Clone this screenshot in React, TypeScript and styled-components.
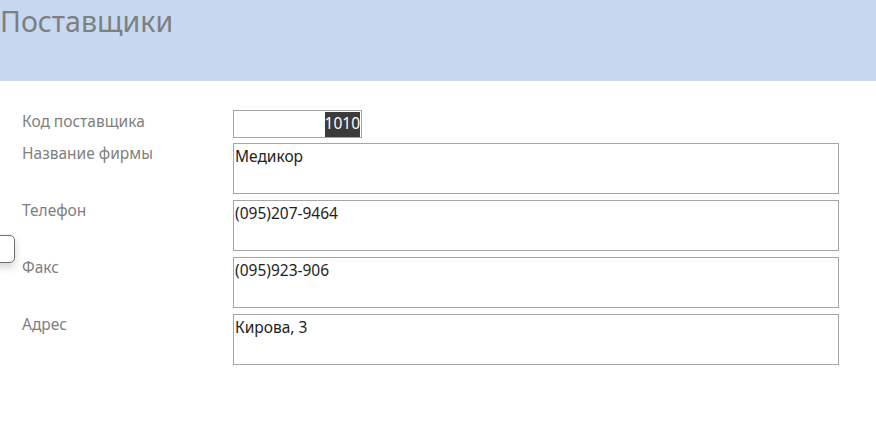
import React from "react";
import styled, { createGlobalStyle } from "styled-components";

const Global = createGlobalStyle`
  html, body { margin: 0; padding: 0; background: #ffffff; }
  body { font-family: "Noto Sans", "Open Sans", sans-serif; }
`;

const Page = styled.div`
  position: relative;
  width: 876px;
  height: 441px;
  background: #ffffff;
  overflow: hidden;
`;

const Header = styled.header`
  height: 81px;
  background: #c6d9f1;
  box-sizing: border-box;
  padding: 2px 0 0 0;
`;

const Title = styled.h1`
  margin: 0;
  font-family: "Noto Sans", sans-serif;
  font-weight: 400;
  font-size: 28.5px;
  line-height: 38px;
  color: #7f7f7f;
  letter-spacing: 0px;
`;

const Form = styled.div`
  display: grid;
  grid-template-columns: 211px 606px;
  row-gap: 5px;
  padding: 29px 0 0 22px;
  align-items: start;
`;

const Label = styled.div<{ $offset: number }>`
  font-size: 15.5px;
  line-height: 19px;
  color: #7f7f7f;
  padding-top: ${(p) => p.$offset}px;
`;

const Field = styled.div<{ $tall?: boolean; $width?: number }>`
  box-sizing: border-box;
  width: ${(p) => (p.$width ? `${p.$width}px` : "100%")};
  height: ${(p) => (p.$tall ? 51 : 28)}px;
  border: 1px solid #a6a6a6;
  background: #ffffff;
  font-size: 15.5px;
  line-height: 19px;
  color: #1e1e1e;
  padding: 3px 1px;
  display: flex;
  align-items: flex-start;
  justify-content: ${(p) => (p.$tall ? "flex-start" : "flex-end")};
  margin-bottom: ${(p) => (p.$tall ? 1 : 0)}px;
`;

const Selected = styled.span`
  background: #3b3b3b;
  color: #ffffff;
  padding: 2px 0 4px 0;
  margin-top: -2px;
`;

const RecordTab = styled.div`
  position: absolute;
  left: -9px;
  top: 235px;
  width: 24px;
  height: 28px;
  box-sizing: border-box;
  border: 1.5px solid #6f6f6f;
  border-radius: 5px;
  background: #ffffff;
  box-shadow: 0 4px 8px rgba(0, 0, 0, 0.18);
`;

const rows = [
  { label: "Название фирмы", value: "Медикор" },
  { label: "Телефон", value: "(095)207-9464" },
  { label: "Факс", value: "(095)923-906" },
  { label: "Адрес", value: "Кирова, 3" },
];

export default function App() {
  return (
    <Page>
      <Global />
      <Header>
        <Title>Поставщики</Title>
      </Header>
      <Form>
        <Label $offset={2}>Код поставщика</Label>
        <Field $width={129}>
          <Selected>1010</Selected>
        </Field>
        {rows.map((r) => (
          <React.Fragment key={r.label}>
            <Label $offset={1}>{r.label}</Label>
            <Field $tall>{r.value}</Field>
          </React.Fragment>
        ))}
      </Form>
      <RecordTab />
    </Page>
  );
}
